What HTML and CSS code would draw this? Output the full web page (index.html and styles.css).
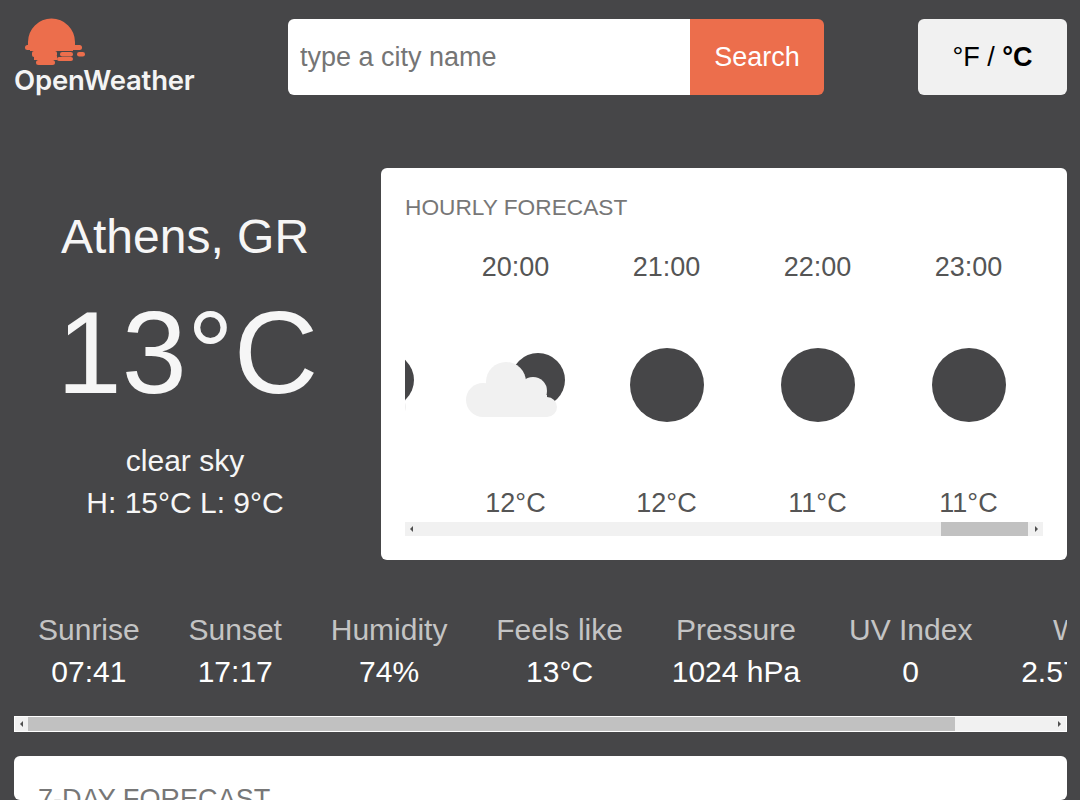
FILE: index.html
```html
<!doctype html>
<html>
<head>
<meta charset="utf-8">
<title>OpenWeather</title>
<link rel="stylesheet" href="styles.css">
</head>

<body>
	<svg class="defs">
		<defs>
			<g id="cloudy">
				<circle cx="73" cy="45" r="27" fill="#464648"/>
				<g fill="#f1f1f1">
					<circle cx="41" cy="47" r="20"/>
					<circle cx="68" cy="56" r="14"/>
					<circle cx="18" cy="65" r="17"/>
					<circle cx="82" cy="72" r="10"/>
					<rect x="18" y="60" width="64" height="22"/>
				</g>
			</g>
			<circle id="night" cx="51" cy="50" r="37" fill="#464648"/>
		</defs>
	</svg>

	<div class="header">
		<div class="logo">
			<svg class="logo_sun" width="72" height="46" viewBox="0 0 72 46">
				<g fill="#ec6e4c">
					<path d="M14 26v-3a23.5 23.5 0 0 1 47 0v3z"/>
					<rect x="11" y="26" width="57" height="5" rx="2.5"/>
					<rect x="16" y="30" width="43" height="2"/>
					<rect x="18" y="32" width="25" height="6" rx="2"/>
					<rect x="46" y="33" width="13" height="4.5" rx="2.2"/>
					<rect x="63" y="33" width="8" height="4.5" rx="2.2"/>
					<rect x="20" y="37" width="23" height="4"/>
					<rect x="43" y="38" width="16" height="4" rx="2"/>
					<rect x="22" y="41" width="19" height="5" rx="2.5"/>
				</g>
			</svg>
			<div class="logo_text">OpenWeather</div>
		</div>
		<div class="search">
			<input class="search_input" type="text" placeholder="type a city name">
			<button class="search_btn">Search</button>
		</div>
		<button class="unit">°F / <b>°C</b></button>
	</div>

	<div class="main">
		<div class="now">
			<div class="now_city">Athens, GR</div>
			<div class="now_temp">13°C</div>
			<div class="now_line now_desc">clear sky</div>
			<div class="now_line">H: 15°C L: 9°C</div>
		</div>
		<div class="card hourly">
			<div class="card_title">HOURLY FORECAST</div>
			<div class="hours">
				<ul>
					<li><span class="hour_time">19:00</span><svg viewBox="0 0 100 100"><use href="#cloudy"/></svg><span class="hour_temp">13°C</span></li>
					<li><span class="hour_time">20:00</span><svg viewBox="0 0 100 100"><use href="#cloudy"/></svg><span class="hour_temp">12°C</span></li>
					<li><span class="hour_time">21:00</span><svg viewBox="0 0 100 100"><use href="#night"/></svg><span class="hour_temp">12°C</span></li>
					<li><span class="hour_time">22:00</span><svg viewBox="0 0 100 100"><use href="#night"/></svg><span class="hour_temp">11°C</span></li>
					<li><span class="hour_time">23:00</span><svg viewBox="0 0 100 100"><use href="#night"/></svg><span class="hour_temp">11°C</span></li>
				</ul>
			</div>
			<div class="bar bar_small">
				<i class="arrow_l"></i>
				<div class="bar_space"></div>
				<div class="bar_thumb"></div>
				<i class="arrow_r"></i>
			</div>
		</div>
	</div>

	<ul class="stats">
		<li><span>Sunrise</span><b>07:41</b></li>
		<li><span>Sunset</span><b>17:17</b></li>
		<li><span>Humidity</span><b>74%</b></li>
		<li><span>Feels like</span><b>13°C</b></li>
		<li><span>Pressure</span><b>1024 hPa</b></li>
		<li><span>UV Index</span><b>0</b></li>
		<li><span>Wind</span><b>2.57 km/h</b></li>
	</ul>
	<div class="bar bar_big">
		<i class="arrow_l"></i>
		<div class="bar_thumb"></div>
		<div class="bar_space"></div>
		<i class="arrow_r"></i>
	</div>

	<div class="card week">
		<div class="card_title week_title">7-DAY FORECAST</div>
	</div>
</body>
</html>
```

FILE: styles.css
```css
* {margin:0; padding:0; list-style:none; box-sizing:border-box;}
html, body {height:800px; overflow:hidden;}
body {background:#464648; padding:19px 13px 0 14px; font-family:"Liberation Sans", Arial, sans-serif; color:#fff;}
.defs {display:block; width:0; height:0;}

.header {display:flex; justify-content:space-between; height:76px;}
.logo {width:180px; display:flex; flex-direction:column;}
.logo_sun {display:block; height:46px; overflow:visible;}
.logo_text {font-family:Inter, sans-serif; font-weight:600; font-size:27.5px; line-height:30px; letter-spacing:-0.2px; color:#f4f4f4;}
.search {width:536px; display:flex; border-radius:6px; overflow:hidden;}
.search_input {flex:1; min-width:0; border:0; outline:0; background:#fff; padding:0 12px; font:27px "Liberation Sans", Arial, sans-serif; color:#555;}
.search_input::placeholder {color:#757575; opacity:1;}
.search_btn {width:134px; border:0; background:#ec6e4c; color:#fff; font:27px "Liberation Sans", Arial, sans-serif;}
.unit {width:149px; border:0; border-radius:6px; background:#f1f1f1; color:#000; font:27px "Liberation Sans", Arial, sans-serif;}

.main {display:grid; grid-template-columns:342px 686px; gap:25px; margin-top:73px;}
.now {text-align:center; padding-top:41px;}
.now_city {font-size:48px; line-height:56px; color:#f6f6f6;}
.now_temp {font-size:117px; line-height:140px; margin-top:18px; padding-left:5px; color:#f6f6f6;}
.now_line {font-size:30px; line-height:42px; color:#f6f6f6;}
.now_desc {margin-top:17px;}

.card {background:#fff; border-radius:6px;}
.card_title {font-size:22.7px; line-height:26px; color:#777;}
.hourly {height:392px; padding:26px 24px 0;}
.hours {height:272px; margin-top:31px; overflow:hidden;}
.hours ul {display:flex; margin-left:-117px;}
.hours li {flex:0 0 151px; display:flex; flex-direction:column; align-items:center; font-size:27px; line-height:32px; color:#555;}
.hours span {margin-left:2px;}
.hours svg {display:block; width:100px; height:100px; margin-top:52px;}
.hour_temp {margin-top:52px;}

.bar {display:flex; align-items:center; background:#f1f1f1;}
.bar_space {flex:1;}
.bar_thumb {background:#c1c1c1; height:100%;}
.arrow_l, .arrow_r {flex:0 0 15px; height:100%; position:relative;}
.arrow_l:after, .arrow_r:after {content:""; position:absolute; top:50%; margin-top:-3px; border:3px solid transparent;}
.arrow_l:after {left:5px; border-right-color:#505050; border-left-width:0;}
.arrow_r:after {right:5px; border-left-color:#505050; border-right-width:0;}
.bar_small {height:14px; margin-top:-1px;}
.bar_small .bar_thumb {width:87px;}
.bar_big {height:16px; border:1px solid #fff; margin-top:23px;}
.bar_big .arrow_l, .bar_big .arrow_r {flex-basis:13px;}
.bar_big .bar_thumb {width:927px;}

.stats {display:flex; gap:48.8px; padding-left:24px; margin-top:49px; height:84px; overflow:hidden; white-space:nowrap; font-size:30px; line-height:42px;}
.stats li {display:flex; flex-direction:column; align-items:center; flex:none;}
.stats span {color:#c4c4c4;}
.stats b {font-weight:normal; color:#fff;}

.week {height:44px; margin-top:24px; padding:28px 24px 0; overflow:hidden;}
.week_title {font-size:27.1px; line-height:30px;}
```
